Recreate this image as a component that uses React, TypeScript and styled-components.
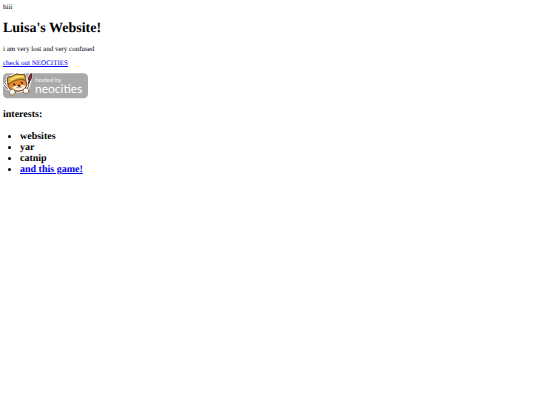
import React from "react";
import styled, { createGlobalStyle } from "styled-components";

const GlobalStyle = createGlobalStyle`
  body {
    margin: 3px;
    background: #fff;
    color: #000;
    font-family: "Liberation Serif", "Times New Roman", serif;
    font-size: 7px;
    line-height: 8px;
    text-rendering: geometricPrecision;
  }
`;

const Page = styled.main`
  display: flex;
  flex-direction: column;
  align-items: flex-start;
`;

const Title = styled.h1`
  margin: 10px 0 9px;
  font-size: 14px;
  line-height: 15px;
`;

const Paragraph = styled.p`
  margin: 0 0 6px;
`;

const Link = styled.a`
  color: #0000ee;
  text-decoration: underline;
`;

const BadgeLink = styled.a`
  display: block;
`;

const Badge = styled.svg`
  display: block;
  width: 85px;
  height: 26px;
`;

const Heading = styled.h2`
  margin: 10px 0 11px;
  font-size: 10px;
  line-height: 11px;
`;

const Interests = styled.ul`
  margin: 0;
  padding-left: 17px;
  font-size: 10px;
  font-weight: bold;
  line-height: 11px;
`;

function NeocitiesBadge() {
  return (
    <Badge viewBox="0 0 255 78" role="img" aria-label="hosted by neocities">
      <rect x="0" y="1" width="255" height="75" rx="13" fill="#a9a9a9" />
      <g strokeLinecap="round" strokeLinejoin="round">
        <path d="M4 36l8 9 7-6M12 30l7 11M15 44l12 13" stroke="#fff" strokeWidth="9" fill="none" />
        <path d="M3 36l7 9 8 1 2-8-6-9M8 32l6 9M15 44l12 13" stroke="#444" strokeWidth="3" fill="none" />
        <path d="M82 10L70 53" stroke="#fff" strokeWidth="13" />
        <path d="M80 20L70 54" stroke="#44301f" strokeWidth="5" />
        <path d="M76 20q1-13 9-18 4 10-2 19z" fill="#a52530" stroke="#54202a" strokeWidth="3" />
        <path d="M15 31L14 13l11-2Q39-1 56 5l9-1 3 17 4 14q-3 14-17 18-22 5-34-5-9-8-6-17z" fill="#fff" stroke="#fff" strokeWidth="8" />
        <path d="M15 31L14 13l11-2Q39-1 56 5l9-1 3 17 4 14q-3 14-17 18-22 5-34-5-9-8-6-17z" fill="#e88a33" stroke="#5c3a1c" strokeWidth="3" />
        <path d="M28 43q8-6 17-4 12-6 23 0-4 10-15 12-18 3-25-8z" fill="#fff3df" />
        <path d="M14 27V13l11-2Q39-1 56 5l9-1 3 18q-15-6-30 0-12 3-20 11z" fill="#e8b83c" stroke="#6b5020" strokeWidth="3" />
        <path d="M24 20q15-12 36-9" stroke="#ffe27d" strokeWidth="4" fill="none" />
        <path d="M25 27q16-11 36-10" stroke="#9c6e25" strokeWidth="2" fill="none" />
        <path d="M32 33l3 3M55 28l3 3M46 38l5-1-2 3z" stroke="#2b1d16" strokeWidth="4" fill="#2b1d16" />
        <path d="M41 44q5 3 8-2 5 4 9-1" stroke="#8b4a30" strokeWidth="2" fill="none" />
        <ellipse cx="28" cy="58" rx="9" ry="9" fill="#fff" stroke="#5f4a31" strokeWidth="2" />
        <ellipse cx="69" cy="54" rx="9" ry="9" fill="#fff" stroke="#5f4a31" strokeWidth="2" />
        <path d="M24 62q4 4 8 0M65 58q4 4 8 0" stroke="#e5aa5c" strokeWidth="3" fill="none" />
      </g>
      <text x="97" y="28" fill="#f5f5f5" fontFamily="Lato, sans-serif" fontSize="18">hosted by</text>
      <text x="96" y="60" fill="#fff" fontFamily="Lato, sans-serif" fontSize="36">neocities</text>
    </Badge>
  );
}

export default function App() {
  return (
    <>
      <GlobalStyle />
      <Page>
        <div>hiii</div>
        <Title>Luisa's Website!</Title>
        <Paragraph>i am very lost and very confused</Paragraph>
        <Paragraph><Link href="#neocities">check out NEOCITIES</Link></Paragraph>
        <BadgeLink href="#neocities"><NeocitiesBadge /></BadgeLink>
        <Heading>interests:</Heading>
        <Interests>
          <li>websites</li>
          <li>yar</li>
          <li>catnip</li>
          <li><Link href="#game">and this game!</Link></li>
        </Interests>
      </Page>
    </>
  );
}
